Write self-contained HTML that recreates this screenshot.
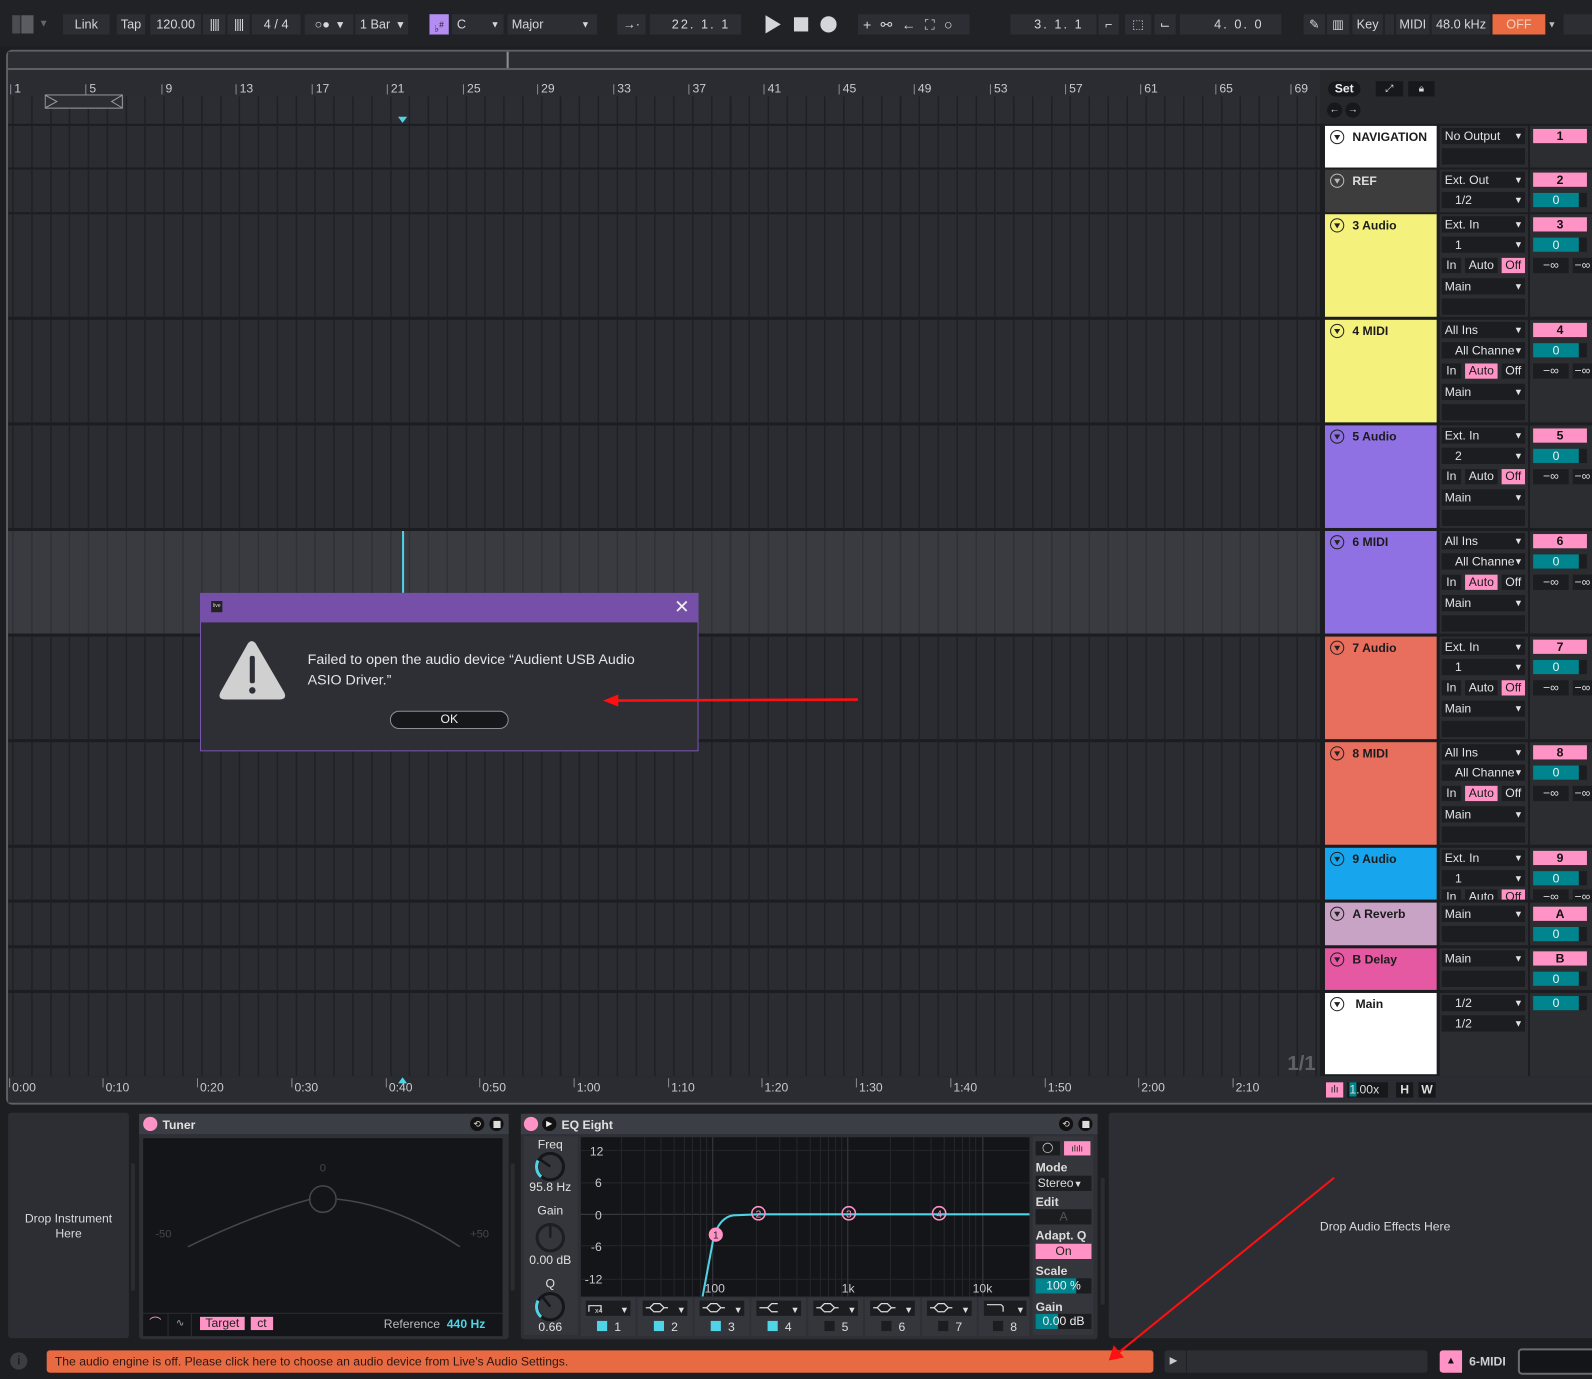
<!DOCTYPE html>
<html><head><meta charset="utf-8">
<style>
*{box-sizing:border-box;margin:0;padding:0}
html,body{width:1592px;height:1379px;overflow:hidden;background:#1d1e21;font-family:"Liberation Sans",sans-serif;}
#r{position:absolute;left:0;top:0;width:1568px;height:1358px;transform:scale(1.01531);transform-origin:0 0;background:#1d1e21;color:#d8d9dc;font-size:12px}
.a{position:absolute}
.tb{position:absolute;top:14px;height:20px;background:#2c2e33;color:#d6d7da;font-size:12.5px;line-height:20px;text-align:center;white-space:nowrap}
.row{position:absolute;left:8px;width:1292px;background-color:#2a2c32;background-image:repeating-linear-gradient(90deg,#1f2024 0 1.5px,transparent 1.5px 18.6px);background-position:4px 0}
.hdr{position:absolute;left:1305px;width:110px;font-size:12px;font-weight:bold;color:#1b1b1b}
.hdr .ic{position:absolute;left:5px;top:4px;width:14px;height:14px;border:1.5px solid #222;border-radius:50%}
.hdr .ic:after{content:"";position:absolute;left:2.5px;top:3.5px;border-left:3.5px solid transparent;border-right:3.5px solid transparent;border-top:5px solid #222}
.hdr .ic.l{border-color:#bbb}
.hdr .ic.l:after{border-top-color:#bbb}
.hdr b{position:absolute;left:27px;top:4px}
.io{position:absolute;left:1418px;width:87px;background:#2b2d31}
.mx{position:absolute;left:1507px;width:61px;background:#2b2d31}
.dd{position:absolute;left:1420px;width:82px;height:16px;background:#1c1d20;color:#e2e3e5;font-size:12px;line-height:16px;padding-left:3px;white-space:nowrap;overflow:hidden}
.dd i{position:absolute;right:2px;top:0;font-style:normal;font-size:9px}
.sb{position:absolute;height:15px;background:#1c1d20;color:#e2e3e5;font-size:12px;line-height:15px;text-align:center}
.pk{background:#ff93c6 !important;color:#1a1a1a !important}
.num{position:absolute;left:1510px;width:53px;height:14px;background:#ff93c6;color:#111;font-size:12px;line-height:14px;text-align:center;font-weight:bold}
.vol{position:absolute;left:1510px;width:53px;height:14px;background:#1c1d20}
.vol:before{content:"";position:absolute;left:0;top:0;width:45px;height:14px;background:#00848d}
.vol:after{content:"0";position:absolute;left:0;width:45px;top:0;line-height:14px;text-align:center;color:#e8f6f7;font-size:12px}
.inf{position:absolute;height:15px;background:#1c1d20;color:#ddd;font-size:12px;line-height:15px;text-align:center}
.rl{position:absolute;top:80px;color:#c9cacd;font-size:12px}
.rl:before{content:"";position:absolute;left:-4px;top:3px;width:1px;height:10px;background:#8a8c91}
.tl{position:absolute;top:1064px;color:#c9cacd;font-size:12px}
.tl:before{content:"";position:absolute;left:-3px;top:-2px;width:1px;height:9px;background:#8a8c91}
</style></head><body><div id="r">

<div class="a" style="left:0;top:0;width:1568px;height:46px;background:#212226"></div>
<div class="a" style="left:12px;top:15px;width:8px;height:18px;background:#4a4c51"></div>
<div class="a" style="left:21px;top:15px;width:12px;height:18px;background:#5a5c61"></div>
<div class="a" style="left:38px;top:14px;color:#666;font-size:10px;line-height:20px">▼</div>
<div class="tb" style="left:62px;width:46px">Link</div>
<div class="tb" style="left:115px;width:28px">Tap</div>
<div class="tb" style="left:148px;width:50px">120.00</div>
<div class="tb" style="left:200px;width:22px;letter-spacing:-1px">||||</div>
<div class="tb" style="left:224px;width:22px;letter-spacing:-1px">||||</div>
<div class="tb" style="left:248px;width:48px">4 / 4</div>
<div class="tb" style="left:300px;width:48px">○● &nbsp;▾</div>
<div class="tb" style="left:350px;width:52px">1 Bar &nbsp;▾</div>
<div class="tb" style="left:423px;width:19px;background:#b48df2;color:#222;font-size:10px">♭<sup>#</sup></div>
<div class="tb" style="left:445px;width:51px;text-align:left;padding-left:5px">C<span style="position:absolute;right:4px;font-size:9px">▼</span></div>
<div class="tb" style="left:500px;width:88px;text-align:left;padding-left:4px">Major<span style="position:absolute;right:7px;font-size:9px">▼</span></div>
<div class="tb" style="left:608px;width:28px">→·</div>
<div class="tb" style="left:640px;width:90px;letter-spacing:2px">&nbsp; 22. 1. 1</div>
<svg class="a" style="left:750px;top:12px" width="80" height="24"><polygon points="4,3 19,12 4,21" fill="#d5d6d9"/><rect x="32" y="5" width="14" height="14" fill="#d5d6d9"/><circle cx="66" cy="12" r="8" fill="#d5d6d9"/></svg>
<div class="tb" style="left:845px;width:110px;text-align:left;font-size:14px;letter-spacing:9px;padding-left:5px">+⚯←⛶○</div>
<div class="tb" style="left:995px;width:85px;letter-spacing:2px">&nbsp;&nbsp;3. 1. 1</div>
<div class="tb" style="left:1082px;width:20px">⌐</div>
<div class="tb" style="left:1108px;width:26px">⬚</div>
<div class="tb" style="left:1137px;width:21px">⌙</div>
<div class="tb" style="left:1162px;width:100px;letter-spacing:2px">&nbsp;&nbsp;&nbsp;4. 0. 0</div>
<div class="tb" style="left:1284px;width:21px">✎</div>
<div class="tb" style="left:1307px;width:22px">▥</div>
<div class="tb" style="left:1332px;width:30px">Key</div>
<div class="tb" style="left:1364px;width:9px"></div>
<div class="tb" style="left:1375px;width:33px">MIDI</div>
<div class="tb" style="left:1410px;width:58px">48.0 kHz</div>
<div class="tb" style="left:1470px;width:52px;background:#ea6b42;color:#f3d0c2">OFF</div>
<div class="a" style="left:1524px;top:14px;font-size:9px;line-height:20px;color:#bbb">▼</div>
<div class="tb" style="left:1540px;width:28px"></div>

<div class="a" style="left:6px;top:49px;width:1570px;height:1039px;border:2px solid #5e6066;border-radius:6px 0 0 6px;background:#26282c"></div>
<div class="a" style="left:8px;top:51px;width:1562px;height:16px;background:#2b2d32"></div>
<div class="a" style="left:8px;top:67px;width:1562px;height:2px;background:#5e6066"></div>
<div class="a" style="left:499px;top:51px;width:2px;height:16px;background:#8d8f94"></div>
<div class="a" style="left:8px;top:69px;width:1292px;height:26px;background:#2a2c31"></div>
<div class="row" style="top:95px;height:27px;background-color:#2b2d33"></div>
<div class="rl" style="left:14px">1</div><div class="rl" style="left:88px">5</div><div class="rl" style="left:163px">9</div><div class="rl" style="left:236px">13</div><div class="rl" style="left:311px">17</div><div class="rl" style="left:385px">21</div><div class="rl" style="left:460px">25</div><div class="rl" style="left:533px">29</div><div class="rl" style="left:608px">33</div><div class="rl" style="left:682px">37</div><div class="rl" style="left:756px">41</div><div class="rl" style="left:830px">45</div><div class="rl" style="left:904px">49</div><div class="rl" style="left:979px">53</div><div class="rl" style="left:1053px">57</div><div class="rl" style="left:1127px">61</div><div class="rl" style="left:1201px">65</div><div class="rl" style="left:1275px">69</div>
<svg class="a" style="left:44px;top:93px" width="78" height="15"><rect x="0.5" y="0.5" width="76" height="13" fill="#2c2e33" stroke="#9a9ca1"/><polyline points="1,1 12,7 1,13" fill="none" stroke="#9a9ca1"/><polyline points="76,1 66,7 76,13" fill="none" stroke="#9a9ca1"/></svg>
<svg class="a" style="left:392px;top:114px" width="10" height="8"><polygon points="0,1 9,1 4.5,7" fill="#4fd3e6"/></svg>
<div class="a" style="left:1308px;top:80px;width:32px;height:15px;border-radius:8px;background:#17181b;color:#eee;font-size:12px;text-align:center;line-height:15px;font-weight:bold">Set</div>
<div class="a" style="left:1355px;top:80px;width:27px;height:15px;background:#17181b;color:#ddd;font-size:10px;text-align:center;line-height:15px">⤢</div>
<div class="a" style="left:1387px;top:80px;width:26px;height:15px;background:#17181b;color:#ddd;font-size:10px;text-align:center;line-height:15px">🔒︎</div>
<div class="a" style="left:1307px;top:101px;width:15px;height:15px;border-radius:50%;background:#17181b;color:#ddd;font-size:10px;text-align:center;line-height:15px">←</div>
<div class="a" style="left:1325px;top:101px;width:15px;height:15px;border-radius:50%;background:#17181b;color:#ddd;font-size:10px;text-align:center;line-height:15px">→</div>

<div class="a" style="left:8px;top:122px;width:1560px;height:938px;background:#1c1d21"></div>
<div class="row" style="top:124px;height:41px"></div>
<div class="row" style="top:167px;height:42px"></div>
<div class="row" style="top:211px;height:101px"></div>
<div class="row" style="top:315px;height:101px"></div>
<div class="row" style="top:419px;height:101px"></div>
<div class="row" style="top:523px;height:101px;background-color:#393b41;background-image:repeating-linear-gradient(90deg,#2f3136 0 1.5px,transparent 1.5px 18.6px)"></div>
<div class="row" style="top:627px;height:101px"></div>
<div class="row" style="top:731px;height:101px"></div>
<div class="row" style="top:835px;height:51px"></div>
<div class="row" style="top:889px;height:42px"></div>
<div class="row" style="top:934px;height:41px"></div>
<div class="row" style="top:978px;height:82px"></div>
<div class="a" style="left:396px;top:523px;width:1.5px;height:61px;background:#4fd3e6"></div>
<div class="a" style="left:1268px;top:1037px;font-size:20px;font-weight:bold;color:#5f6167">1/1</div>

<div class="hdr" style="top:124px;height:41px;background:#fff"><span class="ic"></span><b>NAVIGATION</b></div>
<div class="hdr" style="top:167px;height:42px;background:#3d3d3d;color:#ddd"><span class="ic l"></span><b>REF</b></div>
<div class="hdr" style="top:211px;height:101px;background:#f4f27c"><span class="ic"></span><b>3 Audio</b></div>
<div class="hdr" style="top:315px;height:101px;background:#f4f27c"><span class="ic"></span><b>4 MIDI</b></div>
<div class="hdr" style="top:419px;height:101px;background:#8f71e4"><span class="ic"></span><b>5 Audio</b></div>
<div class="hdr" style="top:523px;height:101px;background:#8f71e4"><span class="ic"></span><b>6 MIDI</b></div>
<div class="hdr" style="top:627px;height:101px;background:#e86f5e"><span class="ic"></span><b>7 Audio</b></div>
<div class="hdr" style="top:731px;height:101px;background:#e86f5e"><span class="ic"></span><b>8 MIDI</b></div>
<div class="hdr" style="top:835px;height:51px;background:#17a6ed"><span class="ic"></span><b>9 Audio</b></div>
<div class="hdr" style="top:889px;height:42px;background:#c8a3c6"><span class="ic"></span><b>A Reverb</b></div>
<div class="hdr" style="top:934px;height:41px;background:#e558a2"><span class="ic"></span><b>B Delay</b></div>
<div class="hdr" style="top:978px;height:80px;background:#fff"><span class="ic"></span><b style="left:30px">Main</b></div>

<div class="io" style="top:124px;height:41px"></div><div class="mx" style="top:124px;height:41px"></div>
<div class="io" style="top:167px;height:42px"></div><div class="mx" style="top:167px;height:42px"></div>
<div class="io" style="top:211px;height:101px"></div><div class="mx" style="top:211px;height:101px"></div>
<div class="io" style="top:315px;height:101px"></div><div class="mx" style="top:315px;height:101px"></div>
<div class="io" style="top:419px;height:101px"></div><div class="mx" style="top:419px;height:101px"></div>
<div class="io" style="top:523px;height:101px"></div><div class="mx" style="top:523px;height:101px"></div>
<div class="io" style="top:627px;height:101px"></div><div class="mx" style="top:627px;height:101px"></div>
<div class="io" style="top:731px;height:101px"></div><div class="mx" style="top:731px;height:101px"></div>
<div class="io" style="top:835px;height:51px"></div><div class="mx" style="top:835px;height:51px"></div>
<div class="io" style="top:889px;height:42px"></div><div class="mx" style="top:889px;height:42px"></div>
<div class="io" style="top:934px;height:41px"></div><div class="mx" style="top:934px;height:41px"></div>
<div class="io" style="top:978px;height:82px"></div><div class="mx" style="top:978px;height:82px"></div>

<div class="dd" style="top:126px">No Output<i>▼</i></div><div class="dd" style="top:146px"></div><div class="num" style="top:127px">1</div>
<div class="dd" style="top:169px">Ext. Out<i>▼</i></div><div class="dd" style="top:189px">&nbsp;&nbsp;&nbsp;1/2<i>▼</i></div><div class="num" style="top:170px">2</div><div class="vol" style="top:190px"></div>
<div class="dd" style="top:213px">Ext. In<i>▼</i></div><div class="dd" style="top:233px">&nbsp;&nbsp;&nbsp;1<i>▼</i></div>
<div class="sb" style="left:1420px;top:254px;width:19px">In</div><div class="sb" style="left:1443px;top:254px;width:32px">Auto</div><div class="sb pk" style="left:1479px;top:254px;width:23px">Off</div>
<div class="dd" style="top:274px">Main<i>▼</i></div><div class="dd" style="top:294px"></div>
<div class="num" style="top:214px">3</div><div class="vol" style="top:234px"></div><div class="inf" style="left:1510px;top:254px;width:35px">−∞</div><div class="inf" style="left:1549px;top:254px;width:19px">−∞</div>
<div class="dd" style="top:317px">All Ins<i>▼</i></div><div class="dd" style="top:337px">&nbsp;&nbsp;&nbsp;All Channe<i>▼</i></div>
<div class="sb" style="left:1420px;top:358px;width:19px">In</div><div class="sb pk" style="left:1443px;top:358px;width:32px">Auto</div><div class="sb" style="left:1479px;top:358px;width:23px">Off</div>
<div class="dd" style="top:378px">Main<i>▼</i></div><div class="dd" style="top:398px"></div>
<div class="num" style="top:318px">4</div><div class="vol" style="top:338px"></div><div class="inf" style="left:1510px;top:358px;width:35px">−∞</div><div class="inf" style="left:1549px;top:358px;width:19px">−∞</div>
<div class="dd" style="top:421px">Ext. In<i>▼</i></div><div class="dd" style="top:441px">&nbsp;&nbsp;&nbsp;2<i>▼</i></div>
<div class="sb" style="left:1420px;top:462px;width:19px">In</div><div class="sb" style="left:1443px;top:462px;width:32px">Auto</div><div class="sb pk" style="left:1479px;top:462px;width:23px">Off</div>
<div class="dd" style="top:482px">Main<i>▼</i></div><div class="dd" style="top:502px"></div>
<div class="num" style="top:422px">5</div><div class="vol" style="top:442px"></div><div class="inf" style="left:1510px;top:462px;width:35px">−∞</div><div class="inf" style="left:1549px;top:462px;width:19px">−∞</div>
<div class="dd" style="top:525px">All Ins<i>▼</i></div><div class="dd" style="top:545px">&nbsp;&nbsp;&nbsp;All Channe<i>▼</i></div>
<div class="sb" style="left:1420px;top:566px;width:19px">In</div><div class="sb pk" style="left:1443px;top:566px;width:32px">Auto</div><div class="sb" style="left:1479px;top:566px;width:23px">Off</div>
<div class="dd" style="top:586px">Main<i>▼</i></div><div class="dd" style="top:606px"></div>
<div class="num" style="top:526px">6</div><div class="vol" style="top:546px"></div><div class="inf" style="left:1510px;top:566px;width:35px">−∞</div><div class="inf" style="left:1549px;top:566px;width:19px">−∞</div>
<div class="dd" style="top:629px">Ext. In<i>▼</i></div><div class="dd" style="top:649px">&nbsp;&nbsp;&nbsp;1<i>▼</i></div>
<div class="sb" style="left:1420px;top:670px;width:19px">In</div><div class="sb" style="left:1443px;top:670px;width:32px">Auto</div><div class="sb pk" style="left:1479px;top:670px;width:23px">Off</div>
<div class="dd" style="top:690px">Main<i>▼</i></div><div class="dd" style="top:710px"></div>
<div class="num" style="top:630px">7</div><div class="vol" style="top:650px"></div><div class="inf" style="left:1510px;top:670px;width:35px">−∞</div><div class="inf" style="left:1549px;top:670px;width:19px">−∞</div>
<div class="dd" style="top:733px">All Ins<i>▼</i></div><div class="dd" style="top:753px">&nbsp;&nbsp;&nbsp;All Channe<i>▼</i></div>
<div class="sb" style="left:1420px;top:774px;width:19px">In</div><div class="sb pk" style="left:1443px;top:774px;width:32px">Auto</div><div class="sb" style="left:1479px;top:774px;width:23px">Off</div>
<div class="dd" style="top:794px">Main<i>▼</i></div><div class="dd" style="top:814px"></div>
<div class="num" style="top:734px">8</div><div class="vol" style="top:754px"></div><div class="inf" style="left:1510px;top:774px;width:35px">−∞</div><div class="inf" style="left:1549px;top:774px;width:19px">−∞</div>
<div class="dd" style="top:837px">Ext. In<i>▼</i></div><div class="dd" style="top:857px">&nbsp;&nbsp;&nbsp;1<i>▼</i></div>
<div class="a" style="left:1418px;top:876px;width:150px;height:10px;overflow:hidden">
<div class="sb" style="left:2px;top:0;width:19px">In</div><div class="sb" style="left:25px;top:0;width:32px">Auto</div><div class="sb pk" style="left:61px;top:0;width:23px">Off</div><div class="inf" style="left:92px;top:0;width:35px">−∞</div><div class="inf" style="left:131px;top:0;width:19px">−∞</div></div>
<div class="num" style="top:838px">9</div><div class="vol" style="top:858px"></div>
<div class="dd" style="top:892px">Main<i>▼</i></div><div class="dd" style="top:912px"></div><div class="num" style="top:893px">A</div><div class="vol" style="top:913px"></div>
<div class="dd" style="top:936px">Main<i>▼</i></div><div class="dd" style="top:956px"></div><div class="num" style="top:937px">B</div><div class="vol" style="top:957px"></div>
<div class="dd" style="top:980px">&nbsp;&nbsp;&nbsp;1/2<i>▼</i></div><div class="dd" style="top:1000px">&nbsp;&nbsp;&nbsp;1/2<i>▼</i></div><div class="vol" style="top:981px"></div>

<div class="a" style="left:8px;top:1060px;width:1560px;height:26px;background:#2a2c31"></div>
<div class="tl" style="left:12px">0:00</div><div class="tl" style="left:104px">0:10</div><div class="tl" style="left:197px">0:20</div><div class="tl" style="left:290px">0:30</div><div class="tl" style="left:383px">0:40</div><div class="tl" style="left:475px">0:50</div><div class="tl" style="left:568px">1:00</div><div class="tl" style="left:661px">1:10</div><div class="tl" style="left:753px">1:20</div><div class="tl" style="left:846px">1:30</div><div class="tl" style="left:939px">1:40</div><div class="tl" style="left:1032px">1:50</div><div class="tl" style="left:1124px">2:00</div><div class="tl" style="left:1217px">2:10</div>
<svg class="a" style="left:392px;top:1061px" width="10" height="7"><polygon points="4.5,0 9,6 0,6" fill="#4fd3e6"/></svg>
<div class="a" style="left:1306px;top:1066px;width:17px;height:15px;background:#ff93c6;color:#222;font-size:10px;text-align:center;line-height:15px">ılı</div>
<div class="a" style="left:1327px;top:1066px;width:40px;height:15px;background:#17181b;color:#ddd;font-size:12px;line-height:15px;padding-left:2px"><span style="background:#00848d">1</span>.00x</div>
<div class="a" style="left:1375px;top:1066px;width:17px;height:15px;background:#17181b;color:#ddd;font-size:12px;text-align:center;line-height:15px;font-weight:bold">H</div>
<div class="a" style="left:1397px;top:1066px;width:17px;height:15px;background:#17181b;color:#ddd;font-size:12px;text-align:center;line-height:15px;font-weight:bold">W</div>

<div class="a" style="left:8px;top:1096px;width:119px;height:222px;background:#2c2e34;border-radius:3px"></div>
<div class="a" style="left:8px;top:1193px;width:119px;text-align:center;font-size:12px;line-height:15px;color:#d8d9dc">Drop Instrument<br>Here</div>
<div class="a" style="left:129px;top:1146px;width:4px;height:125px;background:#2a2c30"></div>
<div class="a" style="left:137px;top:1097px;width:364px;height:222px;background:#2e3036;border-radius:3px"></div>
<div class="a" style="left:137px;top:1097px;width:364px;height:20px;background:#3c3e45"></div>
<div class="a" style="left:141px;top:1100px;width:14px;height:14px;border-radius:50%;background:#ff93c6"></div>
<div class="a" style="left:160px;top:1101px;font-weight:bold;font-size:12px;color:#e0e0e0">Tuner</div>
<div class="a" style="left:463px;top:1100px;width:14px;height:14px;border-radius:50%;background:#111;color:#ddd;font-size:9px;text-align:center;line-height:14px">⟲</div>
<div class="a" style="left:482px;top:1100px;width:14px;height:14px;border-radius:50%;background:#111"><div class="a" style="left:3.5px;top:3.5px;width:7px;height:7px;background:#ddd"></div></div>
<div class="a" style="left:141px;top:1121px;width:354px;height:195px;background:#141518"></div>
<svg class="a" style="left:141px;top:1121px" width="354" height="170"><text x="177" y="33" fill="#45474c" font-size="11" text-anchor="middle" font-family="Liberation Sans">0</text><path d="M44 107 Q110 75 165 60" fill="none" stroke="#45474c" stroke-width="1.5"/><path d="M191 60 Q250 66 312 107" fill="none" stroke="#45474c" stroke-width="1.5"/><circle cx="177" cy="60" r="13" fill="none" stroke="#45474c" stroke-width="1.5"/><text x="12" y="98" fill="#45474c" font-size="11" font-family="Liberation Sans">-50</text><text x="322" y="98" fill="#45474c" font-size="11" font-family="Liberation Sans">+50</text></svg>
<div class="a" style="left:141px;top:1293px;width:354px;height:1px;background:#2c2e33"></div>
<div class="a" style="left:141px;top:1294px;width:25px;height:22px;border-right:1px solid #2c2e33;color:#ff93c6;font-size:12px;text-align:center;line-height:18px">⌒</div>
<div class="a" style="left:167px;top:1294px;width:22px;height:22px;border-right:1px solid #2c2e33;color:#aaa;font-size:10px;text-align:center;line-height:20px">∿</div>
<div class="a" style="left:197px;top:1297px;width:44px;height:13px;background:#ff93c6;color:#222;font-size:12px;line-height:13px;text-align:center">Target</div>
<div class="a" style="left:247px;top:1297px;width:22px;height:13px;background:#ff93c6;color:#222;font-size:12px;line-height:13px;text-align:center">ct</div>
<div class="a" style="left:378px;top:1297px;font-size:12px;color:#b8babd">Reference <span style="color:#4fd3e6;font-weight:bold">&nbsp;440 Hz</span></div>
<div class="a" style="left:503px;top:1146px;width:4px;height:125px;background:#2a2c30"></div>
<div class="a" style="left:513px;top:1097px;width:568px;height:222px;background:#2e3036;border-radius:3px"></div>
<div class="a" style="left:513px;top:1097px;width:568px;height:20px;background:#3c3e45"></div>
<div class="a" style="left:516px;top:1100px;width:14px;height:14px;border-radius:50%;background:#ff93c6"></div>
<div class="a" style="left:534px;top:1100px;width:14px;height:14px;border-radius:50%;background:#111;color:#eee;font-size:8px;text-align:center;line-height:14px">▶</div>
<div class="a" style="left:553px;top:1101px;font-weight:bold;font-size:12px;color:#e0e0e0">EQ Eight</div>
<div class="a" style="left:1043px;top:1100px;width:14px;height:14px;border-radius:50%;background:#111;color:#ddd;font-size:9px;text-align:center;line-height:14px">⟲</div>
<div class="a" style="left:1062px;top:1100px;width:14px;height:14px;border-radius:50%;background:#111"><div class="a" style="left:3.5px;top:3.5px;width:7px;height:7px;background:#ddd"></div></div>
<div class="a" style="left:516px;top:1119px;width:53px;height:196px;background:#34363c"></div>
<svg class="a" style="left:516px;top:1119px" width="53" height="196" font-family="Liberation Sans" font-size="12" fill="#e0e0e0" text-anchor="middle">
<text x="26" y="12">Freq</text><circle cx="26" cy="30" r="13" fill="none" stroke="#15161a" stroke-width="3"/><path d="M17 40 A13 13 0 0 1 14 24" fill="none" stroke="#4fd3e6" stroke-width="3"/><line x1="26" y1="30" x2="16" y2="23" stroke="#15161a" stroke-width="2.5"/><text x="26" y="54">95.8 Hz</text>
<text x="26" y="77">Gain</text><circle cx="26" cy="100" r="13" fill="none" stroke="#1d1e22" stroke-width="3"/><line x1="26" y1="100" x2="26" y2="87" stroke="#1d1e22" stroke-width="2.5"/><text x="26" y="126">0.00 dB</text>
<text x="26" y="149">Q</text><circle cx="26" cy="168" r="13" fill="none" stroke="#15161a" stroke-width="3"/><path d="M17 178 A13 13 0 0 1 14 162" fill="none" stroke="#4fd3e6" stroke-width="3"/><line x1="26" y1="168" x2="18" y2="158" stroke="#15161a" stroke-width="2.5"/><text x="26" y="192">0.66</text></svg>
<svg class="a" style="left:572px;top:1120px" width="442" height="157" font-family="Liberation Sans" font-size="12">
<rect width="442" height="157" fill="#141518"/>
<g stroke="#25272b" stroke-width="1">
<line x1="0" y1="13" x2="442" y2="13"/><line x1="0" y1="45" x2="442" y2="45"/><line x1="0" y1="76" x2="442" y2="76" stroke="#3a3c41"/><line x1="0" y1="107" x2="442" y2="107"/><line x1="0" y1="140" x2="442" y2="140"/>
<line x1="40" y1="0" x2="40" y2="157"/><line x1="63" y1="0" x2="63" y2="157"/><line x1="79" y1="0" x2="79" y2="157"/><line x1="92" y1="0" x2="92" y2="157"/><line x1="102" y1="0" x2="102" y2="157"/><line x1="110" y1="0" x2="110" y2="157"/><line x1="118" y1="0" x2="118" y2="157"/><line x1="124" y1="0" x2="124" y2="157"/><line x1="130" y1="0" x2="130" y2="157" stroke="#3a3c41"/>
<line x1="173" y1="0" x2="173" y2="157"/><line x1="196" y1="0" x2="196" y2="157"/><line x1="213" y1="0" x2="213" y2="157"/><line x1="226" y1="0" x2="226" y2="157"/><line x1="236" y1="0" x2="236" y2="157"/><line x1="244" y1="0" x2="244" y2="157"/><line x1="251" y1="0" x2="251" y2="157"/><line x1="257" y1="0" x2="257" y2="157"/><line x1="263" y1="0" x2="263" y2="157" stroke="#3a3c41"/>
<line x1="305" y1="0" x2="305" y2="157"/><line x1="328" y1="0" x2="328" y2="157"/><line x1="345" y1="0" x2="345" y2="157"/><line x1="358" y1="0" x2="358" y2="157"/><line x1="368" y1="0" x2="368" y2="157"/><line x1="376" y1="0" x2="376" y2="157"/><line x1="383" y1="0" x2="383" y2="157"/><line x1="389" y1="0" x2="389" y2="157"/><line x1="396" y1="0" x2="396" y2="157" stroke="#3a3c41"/>
</g>
<g fill="#c8c9cc"><text x="9" y="18">12</text><text x="14" y="49">6</text><text x="14" y="81">0</text><text x="10" y="112">-6</text><text x="4" y="144">-12</text><text x="122" y="153">100</text><text x="257" y="153">1k</text><text x="386" y="153">10k</text></g>
<path d="M120 157 L131 98 Q137 79 150 77 L175 76 L442 76" fill="none" stroke="#4fd3e6" stroke-width="2"/>
<circle cx="133" cy="96" r="7" fill="#ff93c6"/><text x="133" y="100" font-size="10" text-anchor="middle" fill="#222">1</text>
<circle cx="175" cy="75" r="6.5" fill="none" stroke="#ff93c6" stroke-width="1.5"/><text x="175" y="79" font-size="10" text-anchor="middle" fill="#ff93c6">2</text>
<circle cx="264" cy="75" r="6.5" fill="none" stroke="#ff93c6" stroke-width="1.5"/><text x="264" y="79" font-size="10" text-anchor="middle" fill="#ff93c6">3</text>
<circle cx="353" cy="75" r="6.5" fill="none" stroke="#ff93c6" stroke-width="1.5"/><text x="353" y="79" font-size="10" text-anchor="middle" fill="#ff93c6">4</text>
</svg>
<svg class="a" style="left:572px;top:1278px" width="442" height="38" font-family="Liberation Sans" font-size="12">
<rect x="0" y="0" width="54" height="38" fill="#34363c"/><rect x="5" y="3" width="44" height="15" fill="#1c1d20"/><text x="43" y="15" font-size="9" fill="#ddd" text-anchor="middle">▼</text>
<rect x="56" y="0" width="54" height="38" fill="#34363c"/><rect x="61" y="3" width="44" height="15" fill="#1c1d20"/><text x="99" y="15" font-size="9" fill="#ddd" text-anchor="middle">▼</text>
<rect x="112" y="0" width="54" height="38" fill="#34363c"/><rect x="117" y="3" width="44" height="15" fill="#1c1d20"/><text x="155" y="15" font-size="9" fill="#ddd" text-anchor="middle">▼</text>
<rect x="168" y="0" width="54" height="38" fill="#34363c"/><rect x="173" y="3" width="44" height="15" fill="#1c1d20"/><text x="211" y="15" font-size="9" fill="#ddd" text-anchor="middle">▼</text>
<rect x="224" y="0" width="54" height="38" fill="#34363c"/><rect x="229" y="3" width="44" height="15" fill="#1c1d20"/><text x="267" y="15" font-size="9" fill="#ddd" text-anchor="middle">▼</text>
<rect x="280" y="0" width="54" height="38" fill="#34363c"/><rect x="285" y="3" width="44" height="15" fill="#1c1d20"/><text x="323" y="15" font-size="9" fill="#ddd" text-anchor="middle">▼</text>
<rect x="336" y="0" width="54" height="38" fill="#34363c"/><rect x="341" y="3" width="44" height="15" fill="#1c1d20"/><text x="379" y="15" font-size="9" fill="#ddd" text-anchor="middle">▼</text>
<rect x="392" y="0" width="50" height="38" fill="#34363c"/><rect x="397" y="3" width="42" height="15" fill="#1c1d20"/><text x="433" y="15" font-size="9" fill="#ddd" text-anchor="middle">▼</text>
<g fill="none" stroke="#ddd" stroke-width="1.2">
<path d="M8 14 V8 H20 V14"/><path d="M64 10 H68 L72 6 H78 L82 10 L78 14 H72 L68 10 M82 10 H86"/><path d="M120 10 H124 L128 6 H134 L138 10 L134 14 H128 L124 10 M138 10 H142"/><path d="M176 10 H184 L188 6 H194 M184 10 L188 14 H194"/><path d="M232 10 H236 L240 6 H246 L250 10 L246 14 H240 L236 10 M250 10 H254"/><path d="M288 10 H292 L296 6 H302 L306 10 L302 14 H296 L292 10 M306 10 H310"/><path d="M344 10 H348 L352 6 H358 L362 10 L358 14 H352 L348 10 M362 10 H366"/><path d="M400 7 H414 L416 9 V14"/>
</g>
<text x="14" y="15" font-size="7" fill="#ddd">x4</text>
<g font-size="12" fill="#ddd">
<rect x="16" y="23" width="10" height="10" fill="#4fd3e6"/><text x="33" y="33">1</text>
<rect x="72" y="23" width="10" height="10" fill="#4fd3e6"/><text x="89" y="33">2</text>
<rect x="128" y="23" width="10" height="10" fill="#4fd3e6"/><text x="145" y="33">3</text>
<rect x="184" y="23" width="10" height="10" fill="#4fd3e6"/><text x="201" y="33">4</text>
<rect x="240" y="23" width="10" height="10" fill="#1c1d20"/><text x="257" y="33">5</text>
<rect x="296" y="23" width="10" height="10" fill="#1c1d20"/><text x="313" y="33">6</text>
<rect x="352" y="23" width="10" height="10" fill="#1c1d20"/><text x="369" y="33">7</text>
<rect x="406" y="23" width="10" height="10" fill="#1c1d20"/><text x="423" y="33">8</text></g>
</svg>
<div class="a" style="left:1017px;top:1119px;width:60px;height:196px;background:#34363c"></div>
<div class="a" style="left:1020px;top:1124px;width:24px;height:14px;background:#1c1d20;color:#ddd;font-size:10px;text-align:center;line-height:14px">◯</div>
<div class="a" style="left:1048px;top:1124px;width:26px;height:14px;background:#ff93c6;color:#222;font-size:9px;text-align:center;line-height:14px">ılılı</div>
<div class="a" style="left:1020px;top:1143px;font-size:12px;font-weight:bold;color:#ddd">Mode</div>
<div class="a" style="left:1020px;top:1158px;width:55px;height:15px;background:#1c1d20;color:#ddd;font-size:12px;line-height:15px;padding-left:2px">Stereo<span style="font-size:9px">▼</span></div>
<div class="a" style="left:1020px;top:1177px;font-size:12px;font-weight:bold;color:#ddd">Edit</div>
<div class="a" style="left:1020px;top:1191px;width:55px;height:15px;background:#1c1d20;color:#555;font-size:12px;line-height:15px;text-align:center">A</div>
<div class="a" style="left:1020px;top:1210px;font-size:12px;font-weight:bold;color:#ddd">Adapt. Q</div>
<div class="a" style="left:1020px;top:1225px;width:55px;height:15px;background:#ff93c6;color:#222;font-size:12px;line-height:15px;text-align:center">On</div>
<div class="a" style="left:1020px;top:1245px;font-size:12px;font-weight:bold;color:#ddd">Scale</div>
<div class="a" style="left:1020px;top:1259px;width:55px;height:15px;background:#1c1d20"><div class="a" style="left:0;top:0;width:40px;height:15px;background:#00848d"></div><div class="a" style="left:0;width:55px;top:0;line-height:15px;text-align:center;color:#eee;font-size:12px">100 %</div></div>
<div class="a" style="left:1020px;top:1280px;font-size:12px;font-weight:bold;color:#ddd">Gain</div>
<div class="a" style="left:1020px;top:1294px;width:55px;height:15px;background:#1c1d20"><div class="a" style="left:0;top:0;width:22px;height:15px;background:#00848d"></div><div class="a" style="left:0;width:55px;top:0;line-height:15px;text-align:center;color:#eee;font-size:12px">0.00 dB</div></div>
<div class="a" style="left:1084px;top:1160px;width:4px;height:125px;background:#2a2c30"></div>
<div class="a" style="left:1092px;top:1096px;width:476px;height:222px;background:#2c2e34;border-radius:3px 0 0 3px"></div>
<div class="a" style="left:1300px;top:1201px;font-size:12px;color:#d8d9dc">Drop Audio Effects Here</div>

<div class="a" style="left:10px;top:1332px;width:17px;height:17px;border-radius:50%;background:#3b3d42;color:#1d1e21;font-size:12px;font-weight:bold;text-align:center;line-height:17px">i</div>
<div class="a" style="left:46px;top:1330px;width:1090px;height:22px;background:#e86a43;border-radius:3px;color:#2b1a14;font-size:12px;line-height:22px;padding-left:8px">The audio engine is off. Please click here to choose an audio device from Live's Audio Settings.</div>
<div class="a" style="left:1147px;top:1330px;width:259px;height:22px;background:#2c2e34;border-radius:3px"></div>
<div class="a" style="left:1168px;top:1330px;width:1px;height:22px;background:#1d1e21"></div>
<div class="a" style="left:1152px;top:1330px;color:#ccc;font-size:10px;line-height:22px">▶</div>
<div class="a" style="left:1418px;top:1330px;width:22px;height:22px;background:#ff93c6;border-radius:3px 0 0 3px;color:#111;font-size:10px;text-align:center;line-height:22px">▲</div>
<div class="a" style="left:1447px;top:1334px;font-size:12px;font-weight:bold;color:#cfd0d3">6-MIDI</div>
<div class="a" style="left:1495px;top:1328px;width:80px;height:26px;border:2px solid #6a6c72;border-radius:4px;background:#141518"></div>

<div class="a" style="left:197px;top:584px;width:491px;height:156px;background:#2d2f35;border:1px solid #7a55b0"></div>
<div class="a" style="left:197px;top:584px;width:491px;height:29px;background:#7650a8"></div>
<div class="a" style="left:208px;top:592px;width:11px;height:11px;background:#222;color:#ddd;font-size:5px;line-height:11px;text-align:center">live</div>
<div class="a" style="left:664px;top:585px;color:#eee;font-size:18px;line-height:26px">✕</div>
<svg class="a" style="left:214px;top:630px" width="70" height="62"><path d="M30 4 Q34 -1 38 4 L66 52 Q69 59 61 59 L8 59 Q0 59 3 52 Z" fill="#d0d0d0"/><rect x="32" y="16" width="5" height="27" rx="2" fill="#2d2f35"/><circle cx="34.5" cy="50" r="3.2" fill="#2d2f35"/></svg>
<div class="a" style="left:303px;top:639px;font-size:14px;line-height:20px;color:#e4e5e8">Failed to open the audio device “Audient USB Audio<br>ASIO Driver.”</div>
<div class="a" style="left:384px;top:700px;width:117px;height:18px;border:1.5px solid #8d8f94;border-radius:10px;background:#17181b;color:#eee;font-size:12px;text-align:center;line-height:15px">OK</div>

<svg class="a" style="left:0;top:0" width="1568" height="1358"><line x1="845" y1="689" x2="606" y2="690" stroke="#ff1010" stroke-width="2.5"/><polygon points="594,690 609,684 609,696" fill="#ff1010"/><line x1="1314" y1="1160" x2="1102" y2="1332" stroke="#ff1010" stroke-width="2"/><polygon points="1092,1340 1097,1325 1107,1337" fill="#ff1010"/></svg>

</div></body></html>
